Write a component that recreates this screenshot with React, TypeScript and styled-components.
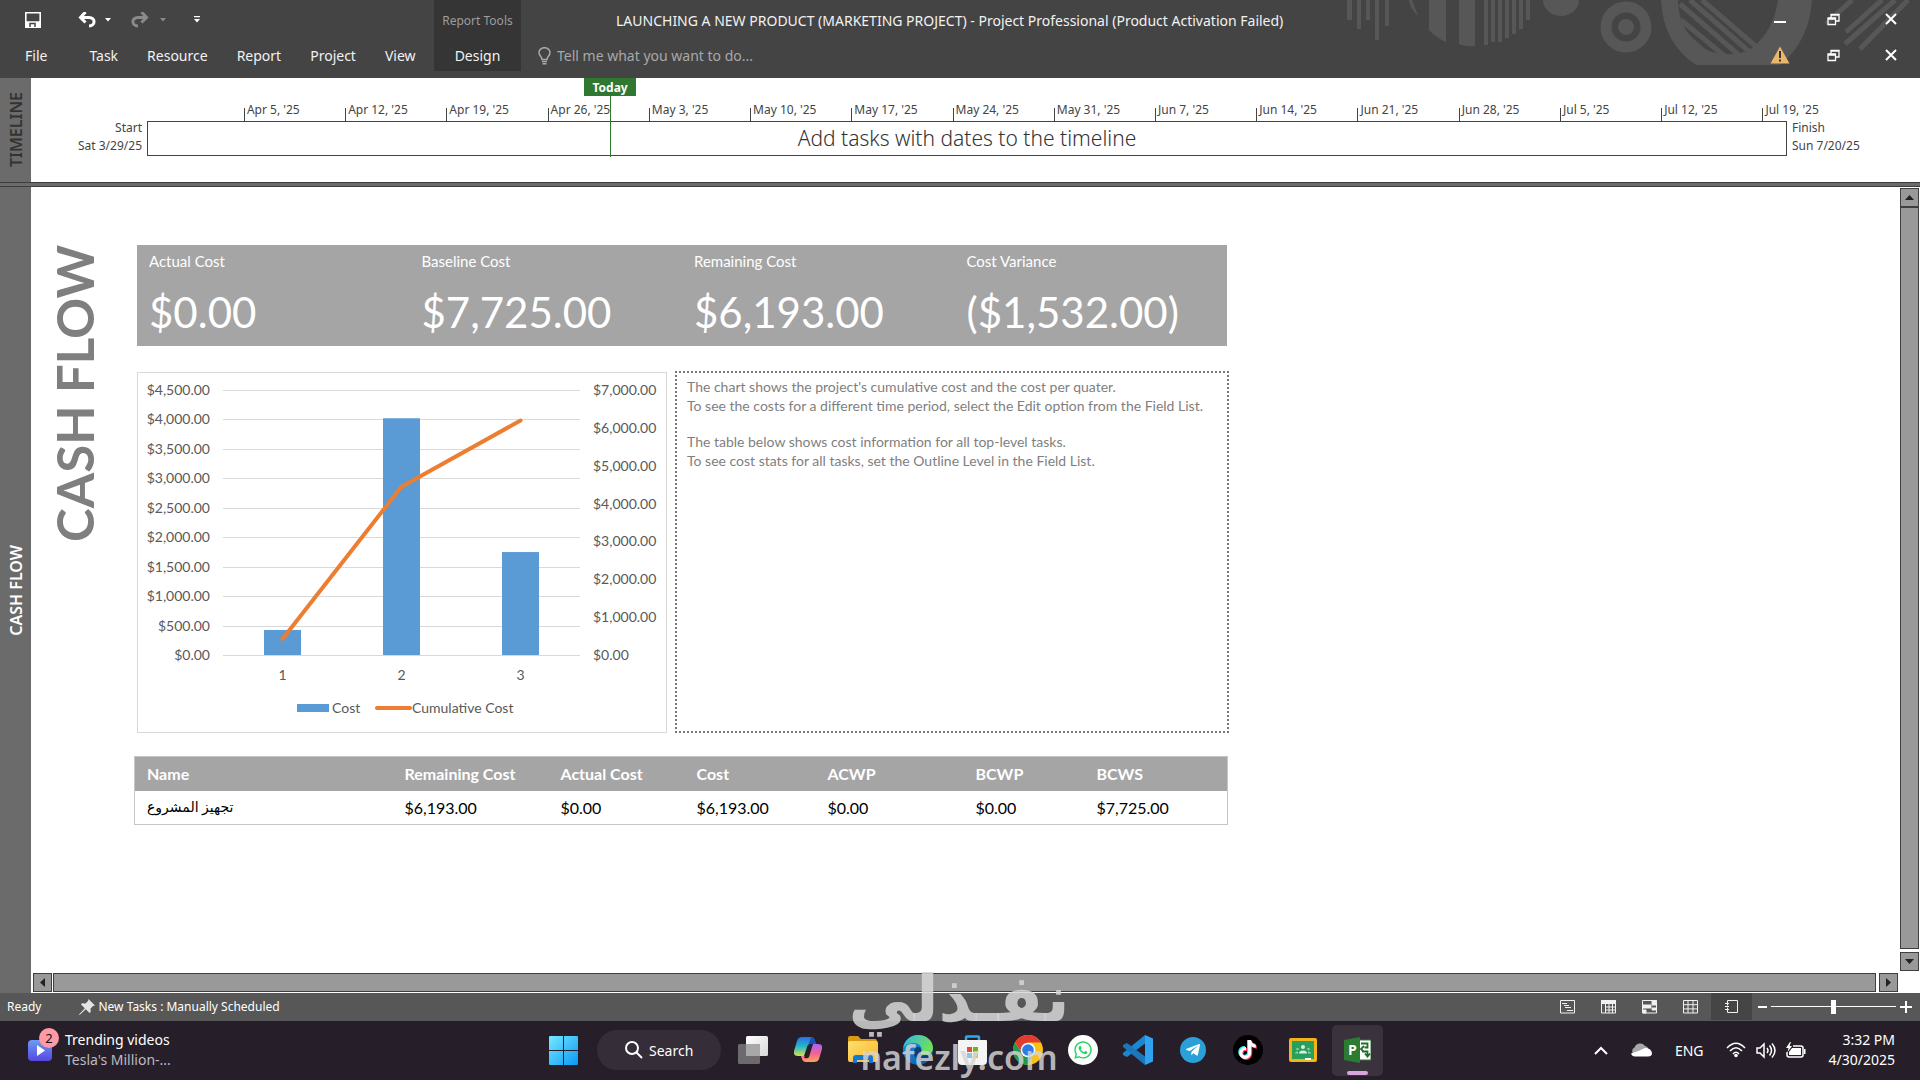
import React from 'react';
import styled, { createGlobalStyle } from 'styled-components';
import { FaWhatsapp, FaTelegramPlane, FaTiktok } from 'react-icons/fa';

const ui = '"Noto Sans", "Open Sans", sans-serif';
const doc = 'Lato, "Open Sans", sans-serif';

const Global = createGlobalStyle`
  *, *::before, *::after { box-sizing: border-box; }
  body { margin: 0; background: #fff; font-family: ${ui}; }
  button, input { font-family: inherit; }
  button { border: 0; background: none; padding: 0; color: inherit; }
  svg { display: block; flex: none; }
  h1, h2, p, dl, dt, dd { margin: 0; }
`;

const Window = styled.div`
  display: flex;
  flex-direction: column;
  min-height: 100vh;
  overflow: hidden;
`;

/* ---------- title bar and ribbon tabs ---------- */

const Header = styled.header`
  position: relative;
  display: flex;
  height: 78px;
  background: #444;
  color: #f2f2f2;
`;

const Pattern = styled.svg`
  position: absolute;
  top: 0;
  right: 0;
`;

const HeaderLeft = styled.div`
  width: 434px;
  display: flex;
  flex-direction: column;
`;

const QuickAccess = styled.div`
  display: flex;
  align-items: center;
  height: 39px;
  padding-left: 25px;
`;

const QuickButton = styled.button<{ $gap: number; $dim?: boolean }>`
  display: flex;
  color: ${p => (p.$dim ? '#8a8a8a' : '#fff')};
  margin-right: ${p => p.$gap}px;
`;

const Tabs = styled.nav`
  display: flex;
  height: 34px;
  padding-left: 11px;
`;

const Tab = styled.button<{ $file?: boolean }>`
  font-size: 14px;
  line-height: 34px;
  padding: 0 15px 0 14px;
  margin-right: ${p => (p.$file ? 13 : 0)}px;
`;

const ContextTab = styled.div`
  display: flex;
  flex-direction: column;
  align-items: center;
  width: 87px;
  height: 71px;
  background: #353535;
`;

const ContextLabel = styled.span`
  font-size: 12px;
  line-height: 42px;
  color: #9d9d9d;
  white-space: nowrap;
`;

const ContextButton = styled.button`
  font-size: 14px;
  line-height: 28px;
`;

const HeaderMain = styled.div`
  flex: 1;
  min-width: 0;
  display: flex;
  flex-direction: column;
`;

const Title = styled.h1`
  font-size: 14px;
  font-weight: 400;
  line-height: 41px;
  padding-left: 95px;
  white-space: nowrap;
`;

const TellMe = styled.label`
  display: flex;
  align-items: center;
  gap: 6px;
  height: 29px;
  padding-left: 17px;
  color: #a8a8a8;
`;

const TellInput = styled.input`
  width: 260px;
  border: 0;
  background: none;
  padding: 0;
  font-size: 14px;
  color: #fff;
  &::placeholder { color: #a8a8a8; opacity: 1; }
`;

const WindowControls = styled.div`
  position: relative;
  display: grid;
  grid-template-columns: 49px 58px 57px;
  grid-template-rows: 38px 34px;
  place-items: center;
  padding-right: 1px;
`;

const IconButton = styled.button`
  display: flex;
`;

/* ---------- timeline ---------- */

const Rail = styled.div<{ $dark?: boolean }>`
  width: 31px;
  flex: none;
  display: flex;
  align-items: center;
  justify-content: center;
  background: #6b6b6b;
  color: ${p => (p.$dark ? '#333' : '#fff')};
`;

const RailText = styled.span`
  writing-mode: vertical-rl;
  transform: rotate(180deg);
  font-size: 16px;
  font-weight: 600;
  line-height: 20px;
`;

const TimelinePane = styled.section`
  display: flex;
  height: 104px;
`;

const TimelineBody = styled.div`
  flex: 1;
  display: flex;
  align-items: flex-start;
  padding: 18px 51px 0 0;
  color: #444;
  font-size: 12px;
`;

const Edge = styled.div<{ $align: 'left' | 'right' }>`
  width: ${p => (p.$align === 'right' ? 116 : 82)}px;
  padding: 23px 5px 0;
  text-align: ${p => p.$align};
  line-height: 18px;
  white-space: nowrap;
`;

const Track = styled.div`
  position: relative;
  flex: 1;
`;

const Weeks = styled.div`
  display: grid;
  grid-template-columns: 670fr repeat(15, 700fr) 170fr;
  height: 25px;
  align-items: end;
`;

const Week = styled.span`
  min-width: 0;
  height: 13px;
  border-left: 1px solid #444;
  padding-left: 2px;
  white-space: nowrap;
`;

const WeekText = styled.span`
  display: block;
  margin-top: -7px;
  line-height: 18px;
`;

const TimelineBar = styled.div`
  height: 35px;
  border: 1px solid #444;
  text-align: center;
  font-size: 21px;
  font-weight: 300;
  line-height: 33px;
  color: #333;
`;

const Today = styled.div`
  position: absolute;
  left: 28.24%;
  top: -18px;
  height: 79px;
  border-left: 1px solid #2f7a2f;
`;

const TodayFlag = styled.span`
  position: absolute;
  top: 0;
  left: -27px;
  width: 52px;
  height: 18px;
  background: #30782f;
  color: #fff;
  font-size: 12px;
  font-weight: 700;
  line-height: 19px;
  text-align: center;
`;

const Splitter = styled.div`
  height: 5px;
  border: solid #3d3d3d;
  border-width: 1px 0;
  background: #6b6b6b;
`;

/* ---------- report ---------- */

const Main = styled.main`
  flex: 1;
  display: flex;
`;

const ReportPane = styled.div`
  flex: 1;
  min-width: 0;
  display: grid;
  grid-template-columns: 1fr 20px;
  grid-template-rows: 1fr 22px;
`;

const Report = styled.article`
  display: flex;
  align-items: flex-start;
  gap: 34px;
  padding: 58px 20px 0 18px;
  font-family: ${doc};
`;

const ReportTitle = styled.h2`
  width: 51px;
  writing-mode: vertical-rl;
  transform: rotate(180deg);
  font-size: 51px;
  font-weight: 700;
  line-height: 51px;
  color: #7f7f7f;
  white-space: nowrap;
`;

const ReportBody = styled.div`
  flex: 1;
  max-width: 1093px;
`;

const Kpis = styled.dl`
  display: grid;
  grid-template-columns: repeat(4, 1fr);
  height: 101px;
  margin-left: 3px;
  background: #a5a5a5;
  color: #fff;
`;

const Kpi = styled.div`
  padding: 6px 0 0 12px;
`;

const KpiLabel = styled.dt`
  font-size: 15px;
  line-height: 20px;
`;

const KpiValue = styled.dd`
  font-size: 42px;
  line-height: 60px;
  margin-top: 11px;
`;

const Middle = styled.div`
  display: grid;
  grid-template-columns: 530fr 552fr;
  gap: 8px;
  margin: 26px 0 23px 3px;
`;

const ChartBox = styled.figure`
  margin: 0;
  border: 1px solid #d9d9d9;
  svg { width: 100%; height: auto; }
`;

const Notes = styled.div`
  border: 2px dotted #777;
  margin: -1px -2px 0 0;
  padding: 4px 10px;
  font-size: 14px;
  line-height: 19px;
  color: #7f7f7f;
  p + p { margin-top: 17px; }
`;

const Table = styled.table`
  width: 100%;
  table-layout: fixed;
  border-collapse: collapse;
  border: 1px solid #c6c6c6;
  font-size: 16px;
  th, td { height: 34px; padding: 0 0 0 12px; text-align: left; }
  th { background: #a5a5a5; color: #fff; font-weight: 700; }
  td { color: #000; }
`;

const ArabicCell = styled.td`
  font-family: "Liberation Serif", "DejaVu Sans", sans-serif;
  font-size: 14px;
`;

/* ---------- scroll bars ---------- */

const ScrollV = styled.div`
  display: flex;
  flex-direction: column;
  padding: 1px 1px 0 0;
`;

const ScrollH = styled.div`
  display: flex;
  padding: 2px 2px 1px 2px;
`;

const ScrollPart = styled.button`
  flex: 0 0 19px;
  display: flex;
  align-items: center;
  justify-content: center;
  background: #999;
  border: 1px solid #3f3f3f;
`;

const Thumb = styled(ScrollPart)<{ $across?: boolean }>`
  flex: 1;
  margin: ${p => (p.$across ? '0 3px 0 1px' : '0 0 3px')};
`;

/* ---------- status bar ---------- */

const Status = styled.footer`
  display: flex;
  align-items: center;
  height: 28px;
  padding: 0 0 1px 7px;
  background: #575757;
  color: #fff;
  font-size: 12px;
`;

const TaskMode = styled.button`
  display: flex;
  align-items: center;
  gap: 3px;
  margin-left: 38px;
  font-size: 12px;
`;

const Views = styled.div`
  display: flex;
  align-self: stretch;
  margin-left: auto;
`;

const ViewButton = styled.button<{ $active?: boolean }>`
  width: 41px;
  display: flex;
  align-items: center;
  justify-content: center;
  background: ${p => (p.$active ? '#454545' : 'none')};
`;

const Zoom = styled.div`
  display: flex;
  align-items: center;
  gap: 4px;
  padding: 0 8px 0 6px;
`;

const ZoomSlider = styled.input`
  appearance: none;
  width: 125px;
  height: 14px;
  margin: 0;
  background: linear-gradient(#fff, #fff) center / 100% 1px no-repeat;
  &::-webkit-slider-thumb {
    appearance: none;
    width: 5px;
    height: 14px;
    background: #fff;
  }
`;

/* ---------- taskbar ---------- */

const Taskbar = styled.footer`
  position: relative;
  display: grid;
  grid-template-columns: 536px 1fr auto;
  align-items: center;
  height: 59px;
  padding-bottom: 1px;
  background: #261f2a;
  color: #fff;
`;

const Widget = styled.button`
  display: flex;
  align-items: center;
  gap: 13px;
  padding-left: 28px;
  text-align: left;
`;

const WidgetIcon = styled.span`
  position: relative;
  display: block;
`;

const Badge = styled.span`
  position: absolute;
  left: 11px;
  top: -12px;
  width: 20px;
  height: 20px;
  border-radius: 50%;
  background: #ff99a4;
  color: #111;
  font-size: 13px;
  line-height: 20px;
  text-align: center;
`;

const TwoLines = styled.span<{ $right?: boolean }>`
  display: block;
  font-size: 14px;
  line-height: 20px;
  text-align: ${p => (p.$right ? 'right' : 'left')};
`;

const Muted = styled.span`
  color: #bdbac0;
`;

const Apps = styled.div`
  display: flex;
  align-items: center;
`;

const AppButton = styled.button<{ $active?: boolean }>`
  position: relative;
  width: 55px;
  height: 51px;
  display: flex;
  align-items: center;
  justify-content: center;
  &::before {
    content: '';
    display: ${p => (p.$active ? 'block' : 'none')};
    position: absolute;
    inset: 0 2px;
    border-radius: 5px;
    background: #3a333e;
  }
  &::after {
    content: '';
    display: ${p => (p.$active ? 'block' : 'none')};
    position: absolute;
    left: 17px;
    right: 17px;
    bottom: 1px;
    height: 4px;
    border-radius: 2px;
    background: #dba3e0;
  }
  svg { position: relative; }
`;

const Search = styled.label`
  display: flex;
  align-items: center;
  gap: 6px;
  width: 124px;
  height: 40px;
  margin: 0 4px 0 6px;
  padding-left: 28px;
  border-radius: 20px;
  background: #352e38;
`;

const SearchInput = styled.input`
  width: 60px;
  border: 0;
  padding: 0;
  background: none;
  font-size: 14px;
  color: #fff;
  &::placeholder { color: #fff; opacity: 1; }
`;

const Disc = styled.span<{ $bg: string; $size: number }>`
  display: flex;
  align-items: center;
  justify-content: center;
  width: ${p => p.$size}px;
  height: ${p => p.$size}px;
  border-radius: 50%;
  background: ${p => p.$bg};
`;

const Tray = styled.div`
  display: flex;
  align-items: center;
  padding-right: 25px;
`;

const TrayItem = styled.button<{ $gap: number }>`
  display: flex;
  margin-right: ${p => p.$gap}px;
  font-size: 14px;
`;

const Watermark = styled.div`
  position: absolute;
  left: 854px;
  bottom: 5px;
  width: 210px;
  display: flex;
  flex-direction: column;
  align-items: center;
  color: rgba(214, 214, 214, 0.84);
  pointer-events: none;
`;

const Brand = styled.div`
  font-family: "DejaVu Sans", sans-serif;
  font-size: 65px;
  font-weight: 700;
  line-height: 80px;
  white-space: nowrap;
`;

const Domain = styled.div`
  font-size: 34px;
  font-weight: 600;
  line-height: 36px;
`;

/* ---------- drawings ---------- */

const HeaderPattern = () => (
  <Pattern width="580" height="65" viewBox="0 0 580 65" fill="#575757" stroke="none" aria-hidden="true">
    <path d="M7 0h5v20h-5zM17 0h4v29h-4zM26 0h4v20h-4zM35 0h4v40h-4zM45 0h4v26h-4z" />
    <path d="M69 0h3l6 16q-8-8-9-16zM89 0h17v42q-10-4-17-12zM119 0h16v46q-9 1-16-2z" />
    <path d="M144 0h4v45h-4zM151 0h4v42h-4zM158 0h4v42h-4zM165 0h4v38h-4zM172 0h4v34h-4zM179 0h4v29h-4zM186 0h4v20h-4z" />
    <path d="M203 0h36a18 16 0 0 1-36 0z" />
    <circle cx="286" cy="27" r="20" fill="none" stroke="#575757" strokeWidth="11" />
    <circle cx="286" cy="27" r="8" />
    <path d="M321 0h17q0 30 26 49l8 3q24 6 40-4 22-18 26-48h34q-3 42-32 65h-84q-33-22-35-65z" />
    <path d="M340 4l60 52M350 0l62 54M362 0l58 50M341 20l46 38M344 34l28 24" stroke="#575757" strokeWidth="5" />
    <path d="M486 24l26-24M506 32l36-32M505 44l50-44M520 49l48-49" stroke="#575757" strokeWidth="5" />
  </Pattern>
);

const SaveIcon = () => (
  <svg width="16" height="16" viewBox="0 0 16 16" fill="none" stroke="currentColor" strokeWidth="1.6">
    <path d="M.8.8h14.4v14.4H.8z" /><path d="M1 10h14v5H1z" fill="currentColor" />
    <path d="M5 15v-3.500h5V15" stroke="#444" strokeWidth="1.500" />
  </svg>
);
const UndoIcon = ({ flip }: { flip?: boolean }) => (
  <svg width="18" height="16" viewBox="0 0 18 16" fill="none" stroke="currentColor" strokeWidth="3">
    <g transform={flip ? 'matrix(-1 0 0 1 18 0)' : undefined}>
      <path d="M2.500 5.500H11c7 0 6.500 8.500 0 8.500" /><path d="M7.500 0L2.500 5.500l5 5" />
    </g>
  </svg>
);
const Caret = () => <svg width="6" height="4" viewBox="0 0 6 4" fill="currentColor"><path d="M0 0h6L3 3.500z" /></svg>;
const MoreCaret = () => <svg width="6" height="7" viewBox="0 0 6 7" fill="currentColor"><path d="M0 0h6v1.300H0zM0 3h6L3 6.500z" /></svg>;
const Bulb = () => (
  <svg width="13" height="18" viewBox="0 0 13 18" fill="none" stroke="currentColor" strokeWidth="1.500">
    <path d="M4 12.500c0-3-3-3.500-3-7a5.500 4.800 0 0 1 11 0c0 3.500-3 4-3 7z" /><path d="M4 14.500h5M4.500 16.700h4" />
  </svg>
);
const Restore = () => (
  <svg width="13" height="13" viewBox="0 0 13 13" fill="none" stroke="#fff" strokeWidth="1.300">
    <path d="M1 5h7.500v6.500H1zM1 6h7.500" /><path d="M4 5V1.500h8V8H9" /><path d="M4 2h8" />
  </svg>
);
const Close = () => <svg width="12" height="12" viewBox="0 0 12 12" stroke="#fff" strokeWidth="2"><path d="M1 1l10 10M11 1L1 11" /></svg>;
const Minimize = () => <svg width="12" height="12" viewBox="0 0 12 12"><path d="M0 8h12v2H0z" fill="#fff" /></svg>;
const Warning = () => (
  <svg width="20" height="18" viewBox="0 0 20 18"><path d="M10 0.500L19.500 17.500H.5z" fill="#e8b66c" /><path d="M9 5h2v7H9zM9 13.500h2v2H9z" fill="#333" /></svg>
);
const Arrow = ({ d }: { d: string }) => <svg width="9" height="9" viewBox="0 0 9 9" fill="#222"><path d={d} /></svg>;
const Pin = () => (
  <svg width="16" height="16" viewBox="0 0 16 16" fill="#e4e4e4"><path d="M9.500 0l6.500 6.500-2 .5-2.500 2.500.2 3.500-1.200 1-3.700-3.800L.6 16 0 15.400l5.800-6.200L2 5.500l1-1.200 3.500.2L9 2z" /></svg>
);
const ViewIcon = ({ kind }: { kind: number }) => (
  <svg width="15" height="14" viewBox="0 0 15 14" fill="none" stroke="#f0f0f0" strokeWidth="1">
    {kind === 4 ? <path d="M3.500 3V.5h10v12h-10V10M3.500 4v1.500M3.500 7.500V9M1 3.500h4M1 6.500h4M1 9.500h4" /> : <path d="M.5.5h14v12.500H.5z" />}
    {kind === 0 && <path d="M2 3.500h5M4 5.500h5M5 7.500h6M7 10.500h6" />}
    {kind === 1 && <><path d="M0 0h15v4H0z" fill="#f0f0f0" stroke="none" /><path d="M4.500 4v9M8 4v9M11.500 4v9M4 7h10M4 10h10" /></>}
    {kind === 2 && <path d="M10 1h5v4h-5zM1 5h8v3H1zM10 8h4v2h-4zM1 10h3v3H1z" fill="#f0f0f0" />}
    {kind === 3 && <path d="M5 .5V13M10 .5V13M0 4.700h15M0 8.900h15" />}
  </svg>
);
const WinLogo = () => (
  <svg width="29" height="29" viewBox="0 0 29 29">
    <defs><linearGradient id="win" x1="0" y1="0" x2="1" y2="1"><stop offset="0" stopColor="#75eaff" /><stop offset="1" stopColor="#0a97f5" /></linearGradient></defs>
    <path d="M1 0h13v14H0V1a1 1 0 0 1 1-1zM15 0h13a1 1 0 0 1 1 1v13H15zM0 15h14v14H1a1 1 0 0 1-1-1zM15 15h14v13a1 1 0 0 1-1 1H15z" fill="url(#win)" />
  </svg>
);
const SearchIcon = () => <svg width="18" height="18" viewBox="0 0 18 18" fill="none" stroke="#fff" strokeWidth="2"><circle cx="7" cy="7" r="6" /><path d="M11.500 11.500L17 17" /></svg>;
const TaskView = () => (
  <svg width="30" height="28" viewBox="0 0 30 28">
    <defs><linearGradient id="tv" x1="0" y1="0" x2="1" y2="1"><stop offset="0" stopColor="#fff" /><stop offset="1" stopColor="#d8d8d8" /></linearGradient></defs>
    <rect y="8" width="22" height="20" rx="1.500" fill="#6d6a6e" /><rect x="8" width="22" height="20" rx="1.500" fill="url(#tv)" /><path d="M8 8h14v12H8z" fill="#a9a7aa" />
  </svg>
);
const Copilot = () => (
  <svg width="28" height="26" viewBox="0 0 28 26">
    <defs>
      <linearGradient id="cpA" x1="0" y1="0" x2="0" y2="1"><stop offset="0" stopColor="#2a6fe8" /><stop offset=".5" stopColor="#26b8c8" /><stop offset="1" stopColor="#d9e04a" /></linearGradient>
      <linearGradient id="cpB" x1="0" y1="0" x2="0" y2="1"><stop offset="0" stopColor="#a566f0" /><stop offset=".5" stopColor="#f0619a" /><stop offset="1" stopColor="#ffa25a" /></linearGradient>
    </defs>
    <path d="M8 0h9q3 0 4 4l1 3h-5q-3 0-4 3l-3 9H4q-5 0-4-5L3 4q1-4 5-4z" fill="url(#cpA)" />
    <path d="M18 7h6q5 0 4 5l-3 10q-1 3-5 3h-8q-3 0-4-3l-1-3h5q2 0 3-3z" fill="url(#cpB)" />
    <path d="M14 8q2-2 5-1l-4 13q-1 2-5 1l3-9z" fill="#261f2a" />
    <path d="M17 0q3 0 4 4l1 3h-5q-2 0-3 2z" fill="#1d4fb8" />
  </svg>
);
const Explorer = () => (
  <svg width="30" height="28" viewBox="0 0 30 28">
    <defs><linearGradient id="fx" x1="0" y1="0" x2="1" y2="1"><stop offset="0" stopColor="#ffdf70" /><stop offset="1" stopColor="#f9b82b" /></linearGradient></defs>
    <path d="M0 2q0-2 2-2h8l3 3h14q2 0 2 3v6H0z" fill="#d99a12" /><path d="M2 5h26q2 0 2 2v17q0 2-2 2H2q-2 0-2-2V7q0-2 2-2z" fill="url(#fx)" />
    <path d="M5 27v-5q0-3 3-3h14q3 0 3 3v5h-4v-3H9v3z" fill="#1479d2" />
  </svg>
);
const EdgeLogo = () => (
  <svg width="30" height="30" viewBox="0 0 30 30">
    <defs>
      <linearGradient id="egA" x1="0" y1="0" x2="1" y2=".4"><stop offset="0" stopColor="#2fb4ee" /><stop offset="1" stopColor="#6fe05a" /></linearGradient>
      <linearGradient id="egB" x1="0" y1="0" x2="1" y2="1"><stop offset="0" stopColor="#1b9de2" /><stop offset="1" stopColor="#0b4f9e" /></linearGradient>
    </defs>
    <circle cx="15" cy="15" r="15" fill="url(#egB)" />
    <path d="M0 14C1 5 8 0 15 0c9 0 15 6 15 13 0 5-4 7-8 7-3 0-5-1-4-3 2-5-2-9-7-9C6 8 1 10 0 14z" fill="url(#egA)" />
    <path d="M18 17c-1 3 2 4 6 3l4-1c-2 4-5 6-9 6-6 0-9-4-8-8 0-3 2-5 5-5 2 1 3 3 2 5z" fill="#0d3f7e" />
  </svg>
);
const Store = () => (
  <svg width="29" height="30" viewBox="0 0 29 30">
    <path d="M8 6V2.500q0-1 1-1h11q1 0 1 1V6" fill="none" stroke="#2aa9ee" strokeWidth="2.500" />
    <path d="M1 5h27q1 0 1 1v20q0 4-4 4H4q-4 0-4-4V6q0-1 1-1z" fill="#f4f4f4" />
    <path d="M9 12h5v5H9z" fill="#e04f2f" /><path d="M15 12h5v5h-5z" fill="#6fb41d" /><path d="M9 18h5v5H9z" fill="#8cc5ec" /><path d="M15 18h5v5h-5z" fill="#f7bb1c" />
  </svg>
);
const Chrome = () => (
  <svg width="30" height="30" viewBox="0 0 30 30">
    <circle cx="15" cy="15" r="15" fill="#fbc116" /><path d="M2 7.500A15 15 0 0 1 28 7.500H15L9 18z" fill="#e33b2e" /><path d="M2 7.500A15 15 0 0 0 15 30l6-11.500H9z" fill="#219950" />
    <circle cx="15" cy="15" r="7.300" fill="#fff" /><circle cx="15" cy="15" r="5.800" fill="#2f7bea" />
  </svg>
);
const Code = () => (
  <svg width="30" height="30" viewBox="0 0 30 30">
    <path d="M22 0l8 3.500v23L22 30z" fill="#2ea3ef" /><path d="M22 0v8.500L4 22l-4-2v-2z" fill="#1c87d0" /><path d="M22 30v-8.500L4 8 0 10v2z" fill="#1a76bd" />
  </svg>
);
const TikTok = () => (
  <svg width="20" height="20" viewBox="0 0 20 20">
    <g transform="translate(-1 -1)"><FaTiktok size={19} color="#2af0ea" /></g>
    <g transform="translate(1 1)"><FaTiktok size={19} color="#fe2c55" /></g>
    <FaTiktok size={19} color="#fff" />
  </svg>
);
const Classroom = () => (
  <svg width="28" height="24" viewBox="0 0 28 24">
    <rect width="28" height="24" rx="2" fill="#f3b41b" /><path d="M3 3h22v18H3z" fill="#27a05c" />
    <g fill="#d8efe0"><circle cx="14" cy="9" r="2" /><path d="M10 15.500q0-3 4-3t4 3z" /></g>
    <g fill="#8fd0ab"><circle cx="8.500" cy="11" r="1.200" /><circle cx="19.500" cy="11" r="1.200" /><path d="M6 15.500q0-2 3-2v2zM22 15.500q0-2-3-2v2z" /></g><path d="M16 20h6v2h-6z" fill="#fff" />
  </svg>
);
const ProjectLogo = () => (
  <svg width="27" height="26" viewBox="0 0 27 26">
    <path d="M14 3h13v20H14z" fill="#fff" stroke="#2f7d32" /><path d="M17 6.500h6.500v4h-3M20 9l-3 3 3 3M18 14.500h5.500V18M21 16.500l2.500 3 2.500-3" fill="none" stroke="#256a2b" strokeWidth="1.800" />
    <path d="M0 3l16-3v26L0 23z" fill="#2b7b30" />
    <text x="4" y="18" fontFamily="Open Sans, sans-serif" fontSize="14" fontWeight="700" fill="#fff">P</text>
  </svg>
);
const Video = () => (
  <svg width="24" height="21" viewBox="0 0 24 21">
    <defs><linearGradient id="vd" x1="0" y1="0" x2="0" y2="1"><stop offset="0" stopColor="#6c9bf5" /><stop offset="1" stopColor="#5648e0" /></linearGradient></defs>
    <rect width="24" height="21" rx="4" fill="url(#vd)" /><path d="M9 5l8 5.500L9 16z" fill="#fff" />
  </svg>
);
const Chevron = () => <svg width="14" height="9" viewBox="0 0 14 9" fill="none" stroke="#fff" strokeWidth="2"><path d="M1 8l6-6 6 6" /></svg>;
const Cloud = () => (
  <svg width="21" height="14" viewBox="0 0 21 14"><path d="M5 12H4a4 4 0 0 1-.5-7.500A6 6 0 0 1 14 3q3 .5 3 3z" fill="#a8a5ab" /><path d="M4 13.500q-3 0-4-3Q6 9 14 5q6 0 7 5 0 3.500-4 3.500z" fill="#fff" /></svg>
);
const Wifi = () => (
  <svg width="20" height="16" viewBox="0 0 20 16" fill="none" stroke="#fff" strokeWidth="1.600"><path d="M1 6q9-9.500 18 0M4 9q6-6.500 12 0M7 12q3-3.500 6 0" /><circle cx="10" cy="13.500" r="1.800" fill="#fff" stroke="none" /></svg>
);
const Speaker = () => (
  <svg width="20" height="17" viewBox="0 0 20 17" fill="none" stroke="#fff" strokeWidth="1.500"><path d="M1 6h3l4-4v13l-4-4H1zM11 6q2 2.500 0 5M13.500 3.500q4 5 0 10M16 1.500q6 7 0 14" /></svg>
);
const Battery = () => (
  <svg width="20" height="16" viewBox="0 0 20 16"><path d="M7 4h8q2 0 2 2v7q0 2-2 2H3q-2 0-2-2v-3" fill="none" stroke="#fff" strokeWidth="1.500" /><path d="M6 6h9v7H3v-3zM18 7h1.500v5H18zM4 0L0 6h2.500L1.500 10 6 4H3.500L5 0z" fill="#fff" /></svg>
);

/* ---------- data ---------- */

const tabs = ['File', 'Task', 'Resource', 'Report', 'Project', 'View'];

const weeks = [
  "Apr 5, '25", "Apr 12, '25", "Apr 19, '25", "Apr 26, '25", "May 3, '25", "May 10, '25", "May 17, '25", "May 24, '25",
  "May 31, '25", "Jun 7, '25", "Jun 14, '25", "Jun 21, '25", "Jun 28, '25", "Jul 5, '25", "Jul 12, '25", "Jul 19, '25",
];

const kpis = [
  ['Actual Cost', '$0.00'],
  ['Baseline Cost', '$7,725.00'],
  ['Remaining Cost', '$6,193.00'],
  ['Cost Variance', '($1,532.00)'],
];

const columns: [string, string, number][] = [
  ['Remaining Cost', '$6,193.00', 156],
  ['Actual Cost', '$0.00', 136],
  ['Cost', '$6,193.00', 131],
  ['ACWP', '$0.00', 148],
  ['BCWP', '$0.00', 121],
  ['BCWS', '$7,725.00', 143],
];

const money = (n: number) => '$' + n.toLocaleString('en-US', { minimumFractionDigits: 2 });

const Chart = () => {
  const costs = [425, 4020, 1748];
  const base = 282;
  const height = 265;
  const left = 85;
  const right = 442;
  const center = (i: number) => left + ((right - left) * (i + 0.5)) / 3;
  let sum = 0;
  const points = costs.map((c, i) => {
    sum += c;
    return `${center(i)},${base - (sum / 7000) * height}`;
  });
  return (
    <svg viewBox="0 0 528 359" fontFamily={doc} fontSize="14" fill="#595959" role="img" aria-label="Cost and cumulative cost per quarter">
      {Array.from({ length: 10 }, (_, i) => {
        const y = Math.round(base - (height * i) / 9);
        return (
          <g key={i}>
            <rect x={left} y={y} width={right - left} height="1" fill="#d9d9d9" />
            <text x="72" y={y + 5} textAnchor="end">{money(i * 500)}</text>
          </g>
        );
      })}
      {Array.from({ length: 8 }, (_, i) => (
        <text key={i} x="455" y={Math.round(base - (height * i) / 7) + 5}>{money(i * 1000)}</text>
      ))}
      {costs.map((c, i) => (
        <rect key={i} x={center(i) - 18.5} width="37" y={base - (c / 4500) * height} height={(c / 4500) * height} fill="#5b9bd5" />
      ))}
      <polyline points={points.join(' ')} fill="none" stroke="#ed7d31" strokeWidth="4" strokeLinecap="round" strokeLinejoin="round" />
      {costs.map((_, i) => (
        <text key={i} x={center(i)} y="307" textAnchor="middle">{i + 1}</text>
      ))}
      <rect x="159" y="331" width="32" height="8" fill="#5b9bd5" />
      <text x="194" y="340">Cost</text>
      <path d="M239 335h33" stroke="#ed7d31" strokeWidth="4" strokeLinecap="round" />
      <text x="274" y="340">Cumulative Cost</text>
    </svg>
  );
};

export default function App() {
  return (
    <Window>
      <Global />
      <Header>
        <HeaderPattern />
        <HeaderLeft>
          <QuickAccess>
            <QuickButton $gap={37} aria-label="Save"><SaveIcon /></QuickButton>
            <QuickButton $gap={9} aria-label="Undo"><UndoIcon /></QuickButton>
            <QuickButton $gap={20} aria-label="Undo list"><Caret /></QuickButton>
            <QuickButton $gap={11} $dim aria-label="Redo"><UndoIcon flip /></QuickButton>
            <QuickButton $gap={28} $dim aria-label="Redo list"><Caret /></QuickButton>
            <QuickButton $gap={0} aria-label="Customize toolbar"><MoreCaret /></QuickButton>
          </QuickAccess>
          <Tabs>
            {tabs.map((t, i) => <Tab key={t} $file={i === 0}>{t}</Tab>)}
          </Tabs>
        </HeaderLeft>
        <ContextTab>
          <ContextLabel>Report Tools</ContextLabel>
          <ContextButton>Design</ContextButton>
        </ContextTab>
        <HeaderMain>
          <Title>LAUNCHING A NEW PRODUCT (MARKETING PROJECT) - Project Professional (Product Activation Failed)</Title>
          <TellMe>
            <Bulb />
            <TellInput placeholder="Tell me what you want to do..." aria-label="Tell me what you want to do" />
          </TellMe>
        </HeaderMain>
        <WindowControls>
          <IconButton aria-label="Minimize"><Minimize /></IconButton>
          <IconButton aria-label="Restore"><Restore /></IconButton>
          <IconButton aria-label="Close"><Close /></IconButton>
          <IconButton aria-label="Warning"><Warning /></IconButton>
          <IconButton aria-label="Restore project"><Restore /></IconButton>
          <IconButton aria-label="Close project"><Close /></IconButton>
        </WindowControls>
      </Header>

      <TimelinePane>
        <Rail $dark><RailText>TIMELINE</RailText></Rail>
        <TimelineBody>
          <Edge $align="right">Start<br />Sat 3/29/25</Edge>
          <Track>
            <Weeks>
              <span />
              {weeks.map(w => <Week key={w}><WeekText>{w}</WeekText></Week>)}
            </Weeks>
            <TimelineBar>Add tasks with dates to the timeline</TimelineBar>
            <Today><TodayFlag>Today</TodayFlag></Today>
          </Track>
          <Edge $align="left">Finish<br />Sun 7/20/25</Edge>
        </TimelineBody>
      </TimelinePane>
      <Splitter />

      <Main>
        <Rail><RailText>CASH FLOW</RailText></Rail>
        <ReportPane>
          <Report>
            <ReportTitle>CASH FLOW</ReportTitle>
            <ReportBody>
              <Kpis>
                {kpis.map(([k, v]) => <Kpi key={k}><KpiLabel>{k}</KpiLabel><KpiValue>{v}</KpiValue></Kpi>)}
              </Kpis>
              <Middle>
                <ChartBox><Chart /></ChartBox>
                <Notes>
                  <p>The chart shows the project's cumulative cost and the cost per quater.<br />To see the costs for a different time period, select the Edit option from the Field List.</p>
                  <p>The table below shows cost information for all top-level tasks.<br />To see cost stats for all tasks, set the Outline Level in the Field List.</p>
                </Notes>
              </Middle>
              <Table>
                <colgroup>
                  <col width="258" />
                  {columns.map(c => <col key={c[0]} width={c[2]} />)}
                </colgroup>
                <thead><tr><th>Name</th>{columns.map(c => <th key={c[0]}>{c[0]}</th>)}</tr></thead>
                <tbody><tr><ArabicCell lang="ar">تجهيز المشروع</ArabicCell>{columns.map(c => <td key={c[0]}>{c[1]}</td>)}</tr></tbody>
              </Table>
            </ReportBody>
          </Report>
          <ScrollV>
            <ScrollPart aria-label="Scroll up"><Arrow d="M0 7h9L4.500 2z" /></ScrollPart>
            <Thumb aria-label="Vertical position" />
            <ScrollPart aria-label="Scroll down"><Arrow d="M0 2h9L4.500 7z" /></ScrollPart>
          </ScrollV>
          <ScrollH>
            <ScrollPart aria-label="Scroll left"><Arrow d="M7 0v9L2 4.500z" /></ScrollPart>
            <Thumb $across aria-label="Horizontal position" />
            <ScrollPart aria-label="Scroll right"><Arrow d="M2 0v9l5-4.500z" /></ScrollPart>
          </ScrollH>
        </ReportPane>
      </Main>

      <Status>
        <span>Ready</span>
        <TaskMode><Pin />New Tasks : Manually Scheduled</TaskMode>
        <Views>
          {['Gantt Chart', 'Task Usage', 'Team Planner', 'Resource Sheet', 'Report'].map((v, i) => (
            <ViewButton key={v} $active={i === 4} aria-label={v}><ViewIcon kind={i} /></ViewButton>
          ))}
        </Views>
        <Zoom>
          <IconButton aria-label="Zoom out"><svg width="9" height="12" viewBox="0 0 9 12"><path d="M0 5h9v2H0z" fill="#fff" /></svg></IconButton>
          <ZoomSlider type="range" defaultValue={50} aria-label="Zoom" />
          <IconButton aria-label="Zoom in"><svg width="12" height="12" viewBox="0 0 12 12"><path d="M0 5h12v2H0zM5 0h2v12H5z" fill="#fff" /></svg></IconButton>
        </Zoom>
      </Status>

      <Taskbar>
        <Widget>
          <WidgetIcon><Video /><Badge>2</Badge></WidgetIcon>
          <TwoLines>Trending videos<br /><Muted>Tesla's Million-...</Muted></TwoLines>
        </Widget>
        <Apps>
          <AppButton aria-label="Start"><WinLogo /></AppButton>
          <Search><SearchIcon /><SearchInput placeholder="Search" aria-label="Search" /></Search>
          <AppButton aria-label="Task view"><TaskView /></AppButton>
          <AppButton aria-label="Copilot"><Copilot /></AppButton>
          <AppButton aria-label="File Explorer"><Explorer /></AppButton>
          <AppButton aria-label="Edge"><EdgeLogo /></AppButton>
          <AppButton aria-label="Store"><Store /></AppButton>
          <AppButton aria-label="Chrome"><Chrome /></AppButton>
          <AppButton aria-label="WhatsApp"><Disc $bg="#fff" $size={30}><FaWhatsapp size={20} color="#2bd366" /></Disc></AppButton>
          <AppButton aria-label="Code"><Code /></AppButton>
          <AppButton aria-label="Telegram"><Disc $bg="#2a9fd8" $size={26}><FaTelegramPlane size={16} color="#fff" /></Disc></AppButton>
          <AppButton aria-label="TikTok"><Disc $bg="#000" $size={30}><TikTok /></Disc></AppButton>
          <AppButton aria-label="Classroom"><Classroom /></AppButton>
          <AppButton $active aria-label="Project"><ProjectLogo /></AppButton>
        </Apps>
        <Tray>
          <TrayItem $gap={23} aria-label="Hidden icons"><Chevron /></TrayItem>
          <TrayItem $gap={23} aria-label="OneDrive"><Cloud /></TrayItem>
          <TrayItem $gap={22}>ENG</TrayItem>
          <TrayItem $gap={10} aria-label="Network"><Wifi /></TrayItem>
          <TrayItem $gap={10} aria-label="Volume"><Speaker /></TrayItem>
          <TrayItem $gap={23} aria-label="Battery"><Battery /></TrayItem>
          <TwoLines $right>3:32 PM<br />4/30/2025</TwoLines>
        </Tray>
        <Watermark>
          <Brand lang="ar" dir="rtl">نفـذلي</Brand>
          <Domain>nafezly.com</Domain>
        </Watermark>
      </Taskbar>
    </Window>
  );
}
